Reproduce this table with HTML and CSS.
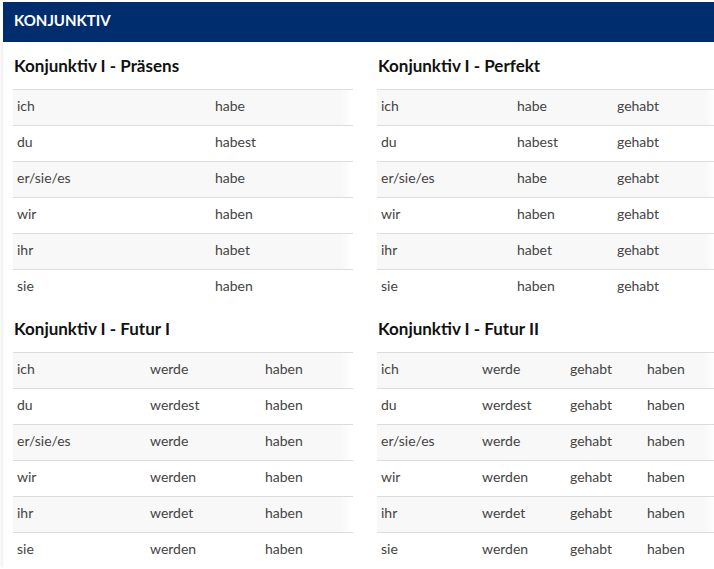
FILE: index.html
```html
<!DOCTYPE html>
<html lang="de">
<head>
<meta charset="utf-8">
<title>Konjunktiv</title>
<link rel="stylesheet" href="styles.css">
</head>
<body>
<div class="card">
  <div class="header">KONJUNKTIV</div>
  <div class="content">
    <section class="block">
      <h2>Konjunktiv I - Präsens</h2>
      <table class="conj">
        <colgroup><col class="w198"><col></colgroup>
        <tr><td>ich</td><td>habe</td></tr>
        <tr><td>du</td><td>habest</td></tr>
        <tr><td>er/sie/es</td><td>habe</td></tr>
        <tr><td>wir</td><td>haben</td></tr>
        <tr><td>ihr</td><td>habet</td></tr>
        <tr><td>sie</td><td>haben</td></tr>
      </table>
    </section>
    <section class="block">
      <h2>Konjunktiv I - Perfekt</h2>
      <table class="conj">
        <colgroup><col class="w136"><col class="w100"><col></colgroup>
        <tr><td>ich</td><td>habe</td><td>gehabt</td></tr>
        <tr><td>du</td><td>habest</td><td>gehabt</td></tr>
        <tr><td>er/sie/es</td><td>habe</td><td>gehabt</td></tr>
        <tr><td>wir</td><td>haben</td><td>gehabt</td></tr>
        <tr><td>ihr</td><td>habet</td><td>gehabt</td></tr>
        <tr><td>sie</td><td>haben</td><td>gehabt</td></tr>
      </table>
    </section>
    <section class="block">
      <h2>Konjunktiv I - Futur I</h2>
      <table class="conj">
        <colgroup><col class="w133"><col class="w115"><col></colgroup>
        <tr><td>ich</td><td>werde</td><td>haben</td></tr>
        <tr><td>du</td><td>werdest</td><td>haben</td></tr>
        <tr><td>er/sie/es</td><td>werde</td><td>haben</td></tr>
        <tr><td>wir</td><td>werden</td><td>haben</td></tr>
        <tr><td>ihr</td><td>werdet</td><td>haben</td></tr>
        <tr><td>sie</td><td>werden</td><td>haben</td></tr>
      </table>
    </section>
    <section class="block">
      <h2>Konjunktiv I - Futur II</h2>
      <table class="conj">
        <colgroup><col class="w101"><col class="w88"><col class="w77"><col></colgroup>
        <tr><td>ich</td><td>werde</td><td>gehabt</td><td>haben</td></tr>
        <tr><td>du</td><td>werdest</td><td>gehabt</td><td>haben</td></tr>
        <tr><td>er/sie/es</td><td>werde</td><td>gehabt</td><td>haben</td></tr>
        <tr><td>wir</td><td>werden</td><td>gehabt</td><td>haben</td></tr>
        <tr><td>ihr</td><td>werdet</td><td>gehabt</td><td>haben</td></tr>
        <tr><td>sie</td><td>werden</td><td>gehabt</td><td>haben</td></tr>
      </table>
    </section>
  </div>
</div>
</body>
</html>
```

FILE: styles.css
```css
html, body {
  margin: 0;
  padding: 0;
  background: #ffffff;
  overflow: hidden;
}

body {
  font-family: Lato, "Open Sans", "Liberation Sans", sans-serif;
  color: #444444;
}

.card {
  margin: 2px 0 0 3px;
  width: 720px;
}

.header {
  background: #002d6e;
  color: #ffffff;
  font-weight: 700;
  font-size: 15px;
  height: 40px;
  line-height: 37px;
  padding-left: 11px;
}

.content {
  display: grid;
  grid-template-columns: 340px 340px;
  column-gap: 24px;
  padding-left: 10px;
  box-shadow: -3px 0 3px -1px rgba(0, 0, 0, 0.07);
}

.block {
  position: relative;
}

.block h2 {
  margin: 12px 0 11px 1px;
  font-size: 17px;
  line-height: 24px;
  font-weight: 700;
  color: #111111;
}

.conj {
  width: 340px;
  border-collapse: collapse;
  table-layout: fixed;
  font-size: 14px;
}

.conj td {
  height: 32px;
  padding: 0 0 3px 4px;
  border-top: 1px solid #dcdcdc;
  vertical-align: middle;
  line-height: 18px;
  white-space: nowrap;
}

.conj tr:nth-child(odd) td {
  background: #f8f8f8;
}

.conj tr:nth-child(odd) td:last-child {
  background: linear-gradient(to right, #f8f8f8 calc(100% - 12px), #ffffff);
}

.w198 { width: 198px; }
.w136 { width: 136px; }
.w100 { width: 100px; }
.w133 { width: 133px; }
.w115 { width: 115px; }
.w101 { width: 101px; }
.w88 { width: 88px; }
.w77 { width: 77px; }
```
